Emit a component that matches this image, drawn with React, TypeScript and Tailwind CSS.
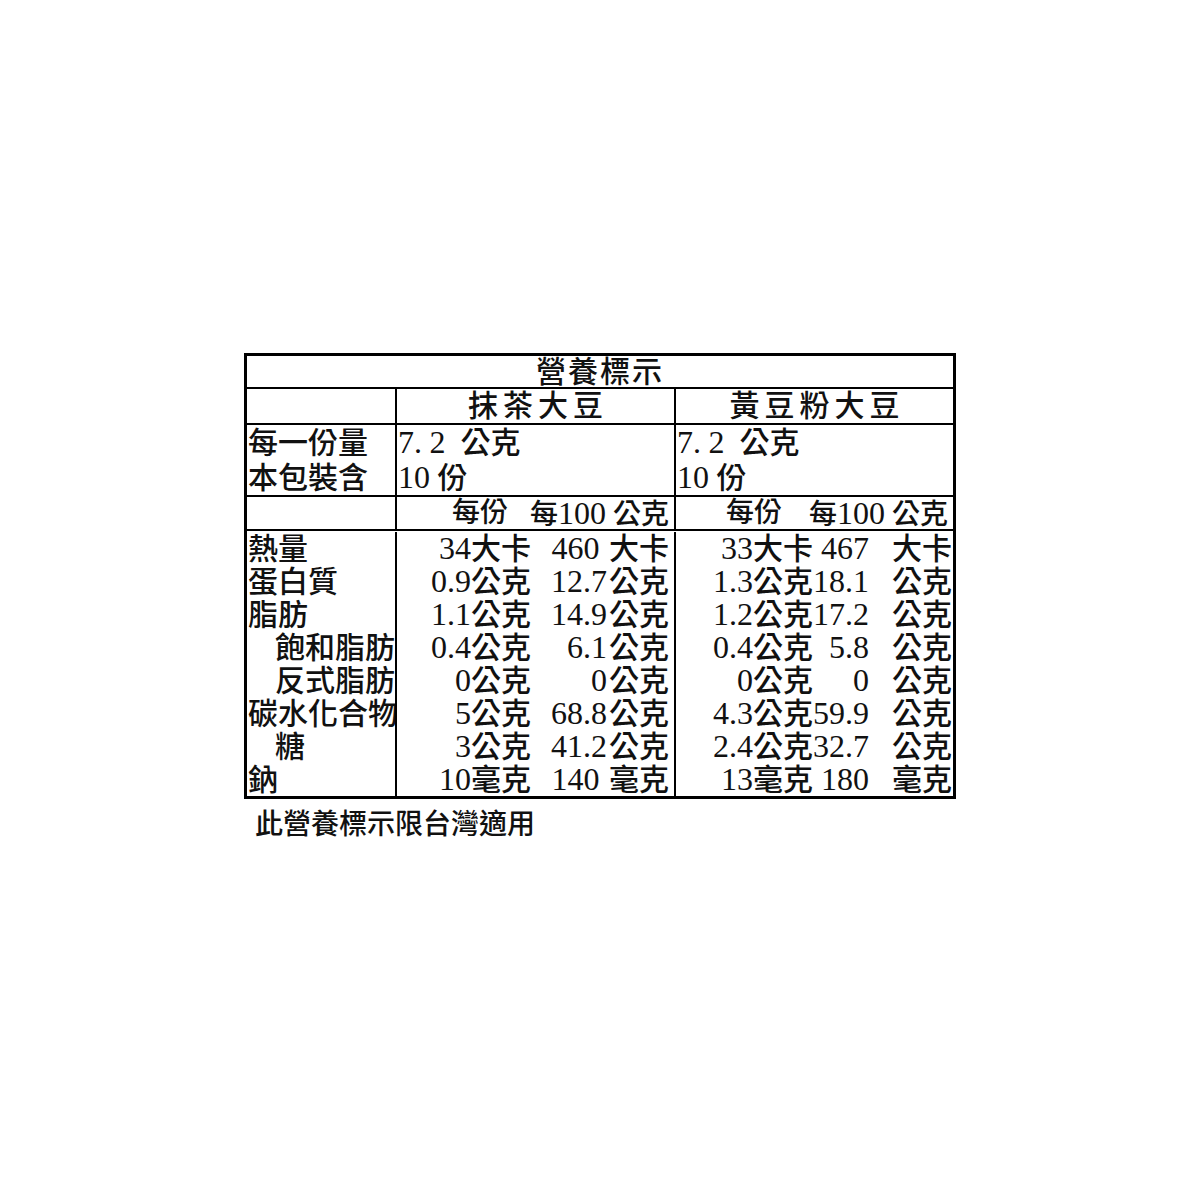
import React from "react";

// Nutrition facts label (營養標示) for two soybean snacks, laid out as a
// ruled table. Digits use a serif face, CJK falls through to Noto Sans CJK TC.

type Row = {
  label: string;
  indent?: boolean;
  a: [string, string, string];
  b: [string, string, string];
};

const ROWS: Row[] = [
  { label: "熱量", a: ["34大卡", "460 ", "大卡"], b: ["33大卡", "467", "大卡"] },
  { label: "蛋白質", a: ["0.9公克", "12.7", "公克"], b: ["1.3公克", "18.1", "公克"] },
  { label: "脂肪", a: ["1.1公克", "14.9", "公克"], b: ["1.2公克", "17.2", "公克"] },
  { label: "飽和脂肪", indent: true, a: ["0.4公克", "6.1", "公克"], b: ["0.4公克", "5.8", "公克"] },
  { label: "反式脂肪", indent: true, a: ["0公克", "0", "公克"], b: ["0公克", "0", "公克"] },
  { label: "碳水化合物", a: ["5公克", "68.8", "公克"], b: ["4.3公克", "59.9", "公克"] },
  { label: "糖", indent: true, a: ["3公克", "41.2", "公克"], b: ["2.4公克", "32.7", "公克"] },
  { label: "鈉", a: ["10毫克", "140 ", "毫克"], b: ["13毫克", "180", "毫克"] },
];

// digits in the label print a bit taller than the CJK text around them
function T({ s }: { s: string }) {
  const parts = s.split(/([0-9.]+)/).filter((p) => p !== "");
  return (
    <>
      {parts.map((p, i) =>
        /^[0-9.]+$/.test(p) ? (
          <span key={i} className="text-[32px]">
            {p}
          </span>
        ) : (
          <React.Fragment key={i}>{p}</React.Fragment>
        )
      )}
    </>
  );
}

export default function App() {
  return (
    <div className="min-h-[1200px] w-full bg-white pt-[353px] font-['Liberation_Serif','Noto_Sans_CJK_TC',serif] font-medium text-[#111]">
      <div className="mx-auto w-[712px]">
        <div className="border-[3px] border-black">
          {/* Title */}
          <div className="flex h-[33px] items-center justify-center border-b-2 border-black text-[30px] leading-[31px] tracking-[2px]">
            營養標示
          </div>

          {/* Product names */}
          <div className="flex h-[36px] border-b-2 border-black text-[30px] leading-[34px]">
            <div className="w-[150px] border-r-2 border-black" />
            <div className="flex w-[279px] justify-center border-r-2 border-black pl-[5px] tracking-[5px]">
              抹茶大豆
            </div>
            <div className="flex flex-1 justify-center pl-[5px] tracking-[5px]">黃豆粉大豆</div>
          </div>

          {/* Serving info */}
          <div className="flex h-[72px] border-b-2 border-black text-[30px] leading-[35px]">
            <div className="w-[150px] border-r-2 border-black pl-[1px]">
              <div>每一份量</div>
              <div>本包裝含</div>
            </div>
            <div className="w-[279px] whitespace-pre border-r-2 border-black pl-[1px]">
              <div>
                <T s="7. 2  公克" />
              </div>
              <div>
                <T s="10 份" />
              </div>
            </div>
            <div className="flex-1 whitespace-pre pl-[1px]">
              <div>
                <T s="7. 2  公克" />
              </div>
              <div>
                <T s="10 份" />
              </div>
            </div>
          </div>

          {/* Column heads */}
          <div className="flex h-[34px] border-b-2 border-black text-[28px] leading-[32px]">
            <div className="w-[150px] border-r-2 border-black" />
            <div className="flex w-[279px] justify-end gap-[22px] whitespace-pre border-r-2 border-black pr-[5px]">
              <span>每份</span>
              <span>
                <T s="每100 公克" />
              </span>
            </div>
            <div className="flex flex-1 justify-end gap-[27px] whitespace-pre pr-[5px]">
              <span>每份</span>
              <span>
                <T s="每100 公克" />
              </span>
            </div>
          </div>

          {/* Nutrients */}
          <div className="pt-px text-[30px] leading-[33px]">
            {ROWS.map((r) => (
              <div key={r.label} className="flex h-[33px]">
                <div
                  className={
                    r.indent
                      ? "w-[150px] overflow-hidden whitespace-nowrap border-r-2 border-black pl-[28px]"
                      : "w-[150px] overflow-hidden whitespace-nowrap border-r-2 border-black pl-[1px]"
                  }
                >
                  {r.label}
                </div>
                <div className="flex w-[279px] whitespace-pre border-r-2 border-black">
                  <span className="w-[134px] text-right">
                    <T s={r.a[0]} />
                  </span>
                  <span className="w-[76px] text-right">
                    <T s={r.a[1]} />
                  </span>
                  <span className="w-[62px] pl-[2px]">{r.a[2]}</span>
                </div>
                <div className="flex flex-1 whitespace-pre">
                  <span className="w-[137px] text-right">
                    <T s={r.b[0]} />
                  </span>
                  <span className="w-[56px] text-right">
                    <T s={r.b[1]} />
                  </span>
                  <span className="w-[83px] text-right">{r.b[2]}</span>
                </div>
              </div>
            ))}
          </div>
        </div>

        <p className="mt-[9px] pl-[11px] text-[28px] leading-[33px]">此營養標示限台灣適用</p>
      </div>
    </div>
  );
}
